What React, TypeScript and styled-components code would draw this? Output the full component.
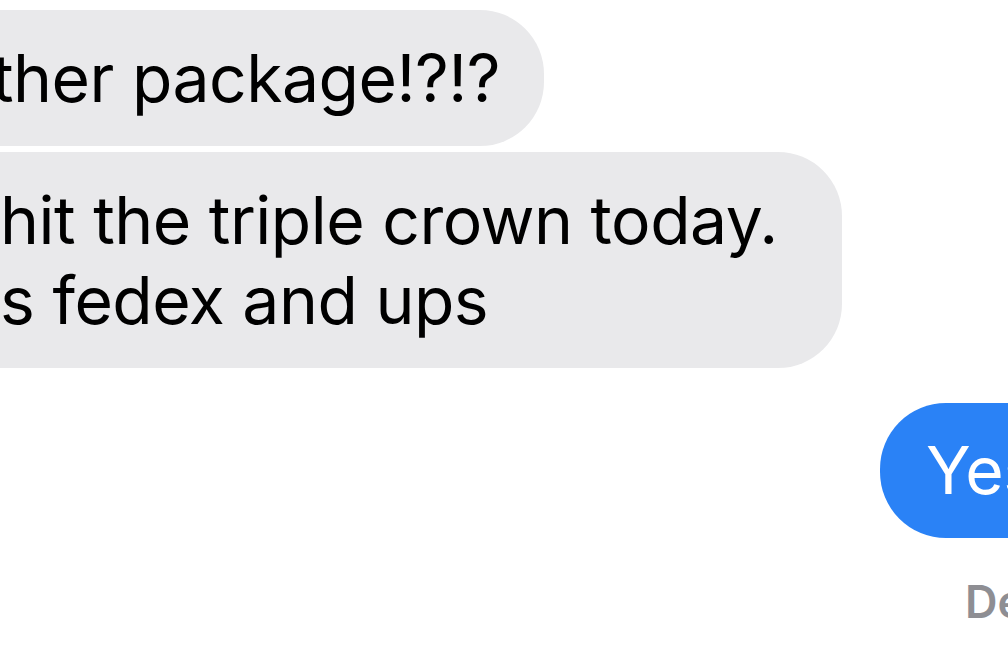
import styled, { createGlobalStyle } from "styled-components"

const Global = createGlobalStyle`
    html, body {
        margin: 0;
        padding: 0;
        background: #ffffff;
        overflow: hidden;
    }
    body {
        font-family: Inter, "Noto Sans", "Liberation Sans", sans-serif;
        -webkit-font-smoothing: antialiased;
    }
`

const Thread = styled.div`
    width: 1008px;
    height: 672px;
    overflow: hidden;
    display: flex;
    flex-direction: column;
    padding-top: 10px;
    box-sizing: border-box;
`

const IncomingRow = styled.div`
    display: flex;
    justify-content: flex-start;
    margin-bottom: 6px;
`

const IncomingBubble = styled.div<{ $width?: number; $shift?: number }>`
    background: #e9e9eb;
    color: #000;
    font-size: 66px;
    line-height: 80px;
    letter-spacing: -0.5px;
    padding: 28px 44px 28px 60px;
    margin-left: ${p => -60 - (p.$shift || 0)}px;
    border-radius: 64px;
    white-space: pre;
    ${p => p.$width ? `width: ${p.$width}px; box-sizing: border-box;` : ""}
`

const OutgoingGroup = styled.div`
    display: flex;
    flex-direction: column;
    align-items: flex-start;
    margin-top: 29px;
    padding-left: 880px;
`

const OutgoingBubble = styled.div`
    background: #2a82f6;
    color: #fff;
    font-size: 66px;
    line-height: 80px;
    letter-spacing: -0.5px;
    padding: 27px 46px 28px 46px;
    border-radius: 66px;
    white-space: pre;
`

const Status = styled.div`
    margin-top: 36px;
    margin-left: 85px;
    color: #8e8e93;
    font-size: 45px;
    font-weight: 600;
    white-space: pre;
`

const App = () => {
    return (
        <>
            <Global />
            <Thread>
                <IncomingRow>
                    <IncomingBubble $shift={8}>ther package!?!?</IncomingBubble>
                </IncomingRow>
                <IncomingRow>
                    <IncomingBubble $width={902}>{"hit the triple crown today.\ns fedex and ups"}</IncomingBubble>
                </IncomingRow>
                <OutgoingGroup>
                    <OutgoingBubble>Yes!!</OutgoingBubble>
                    <Status>Delivered</Status>
                </OutgoingGroup>
            </Thread>
        </>
    )
}

export default App
